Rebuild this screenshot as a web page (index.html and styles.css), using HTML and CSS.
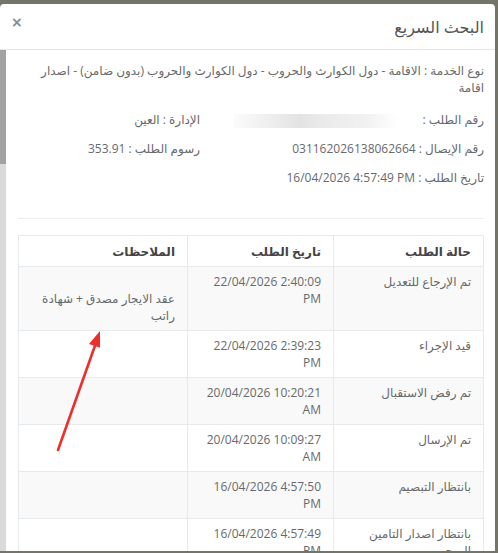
FILE: index.html
```html
<!DOCTYPE html>
<html lang="ar" dir="rtl">
<head>
  <meta charset="UTF-8">
  <title>البحث السريع</title>
  <link rel="stylesheet" href="styles.css">
</head>
<body>
  <div class="modal">
    <div class="modal-header">
      <h4 class="modal-title">البحث السريع</h4>
      <button class="close" type="button">&times;</button>
    </div>

    <div class="modal-main">
      <div class="modal-body">
        <p class="service">نوع الخدمة : الاقامة - دول الكوارث والحروب - دول الكوارث والحروب (بدون ضامن) - اصدار اقامة</p>

        <div class="info-row">
          <p>رقم الطلب : <span class="blurred"></span></p>
          <p>الإدارة : العين</p>
        </div>
        <div class="info-row">
          <p>رقم الإيصال : 031162026138062664</p>
          <p>رسوم الطلب : 353.91</p>
        </div>
        <div class="info-row">
          <p>تاريخ الطلب : <span class="ltr">16/04/2026 4:57:49 PM</span></p>
        </div>

        <hr>

        <div class="table-wrap">
          <table class="history">
            <thead>
              <tr>
                <th class="col-status">حالة الطلب</th>
                <th class="col-date">تاريخ الطلب</th>
                <th>الملاحظات</th>
              </tr>
            </thead>
            <tbody>
              <tr>
                <td>تم الإرجاع للتعديل</td>
                <td><span class="ltr">22/04/2026 2:40:09 PM</span></td>
                <td><br>عقد الايجار مصدق + شهادة راتب</td>
              </tr>
              <tr>
                <td>قيد الإجراء</td>
                <td><span class="ltr">22/04/2026 2:39:23 PM</span></td>
                <td></td>
              </tr>
              <tr>
                <td>تم رفض الاستقبال</td>
                <td><span class="ltr">20/04/2026 10:20:21 AM</span></td>
                <td></td>
              </tr>
              <tr>
                <td>تم الإرسال</td>
                <td><span class="ltr">20/04/2026 10:09:27 AM</span></td>
                <td></td>
              </tr>
              <tr>
                <td>بانتظار التبصيم</td>
                <td><span class="ltr">16/04/2026 4:57:50 PM</span></td>
                <td></td>
              </tr>
              <tr>
                <td>بانتظار اصدار التامين الصحي</td>
                <td><span class="ltr">16/04/2026 4:57:49 PM</span></td>
                <td></td>
              </tr>
            </tbody>
          </table>

          <!-- annotation arrow pointing at the note -->
          <svg class="arrow" width="60" height="130" viewBox="0 0 60 130">
            <line x1="18" y1="126" x2="57" y2="16" stroke="#ec2f2a" stroke-width="2.6" stroke-linecap="round"/>
            <polygon points="60,7 60.5,24 49,20" fill="#ec2f2a"/>
          </svg>
        </div>
      </div>

      <div class="scrollbar">
        <div class="scrollbar-thumb"></div>
      </div>
    </div>
  </div>
</body>
</html>
```

FILE: styles.css
```css
html, body {
  margin: 0;
  height: 100%;
}
body {
  background-color: #74746a;
  font-family: "Open Sans", "Noto Sans", "DejaVu Sans", sans-serif;
  font-size: 12px;
  line-height: 17px;
  color: #676a6c;
}
.modal {
  width: 495px;
  height: 547px;
  margin-top: 4px;
  margin-right: 3px;
  background: #ffffff;
  border-radius: 4px 4px 0 0;
  display: flex;
  flex-direction: column;
  overflow: hidden;
}
.modal-header {
  display: flex;
  justify-content: space-between;
  align-items: flex-start;
  padding: 14px 11px 12px 11px;
  border-bottom: 1px solid #e5e5e5;
}
.modal-title {
  margin: 0;
  font-size: 16px;
  line-height: 19px;
  font-weight: 400;
  color: #555;
}
.close {
  border: 0;
  background: none;
  padding: 0;
  margin-top: -3px;
  font-family: "DejaVu Sans", sans-serif;
  font-size: 14px;
  line-height: 14px;
  font-weight: bold;
  color: #8a8a8a;
  cursor: pointer;
}
.modal-main {
  flex: 1;
  display: flex;
  min-height: 0;
}
.modal-body {
  flex: 1;
  overflow: hidden;
  padding: 12px 11px 0 12px;
}
.scrollbar {
  width: 6px;
  background: #dadada;
}
.scrollbar-thumb {
  height: 114px;
  background: #a2a2a2;
}
p {
  margin: 0 0 12px;
}
.service {
  margin-bottom: 15px;
}
.ltr {
  direction: ltr;
  unicode-bidi: isolate;
}
.info-row {
  display: grid;
  grid-template-columns: 284px 1fr;
}
.blurred {
  display: inline-block;
  width: 165px;
  height: 14px;
  margin-right: 20px;
  vertical-align: middle;
  background: linear-gradient(to left, #ffffff 0%, #f1f1f1 20%, #ebebeb 45%, #e3e3e3 60%, #f2f2f2 85%, #fbfbfb 100%);
}
hr {
  border: 0;
  border-top: 1px solid #eeeeee;
  margin: 20px 0 16px;
}
.table-wrap {
  position: relative;
}
.history {
  width: 100%;
  border-collapse: collapse;
  border: 1px solid #e7eaec;
}
.history th,
.history td {
  border: 1px solid #e7eaec;
  text-align: right;
  vertical-align: top;
  padding: 6px 12px;
}
.history th {
  padding: 7px 12px 6px;
  font-weight: bold;
  color: #444;
}
.col-status {
  width: 125px;
}
.col-date {
  width: 121px;
}
.history tbody tr:nth-child(odd) {
  background: #f9f9f9;
}
.arrow {
  position: absolute;
  left: 22px;
  top: 89px;
}
```
